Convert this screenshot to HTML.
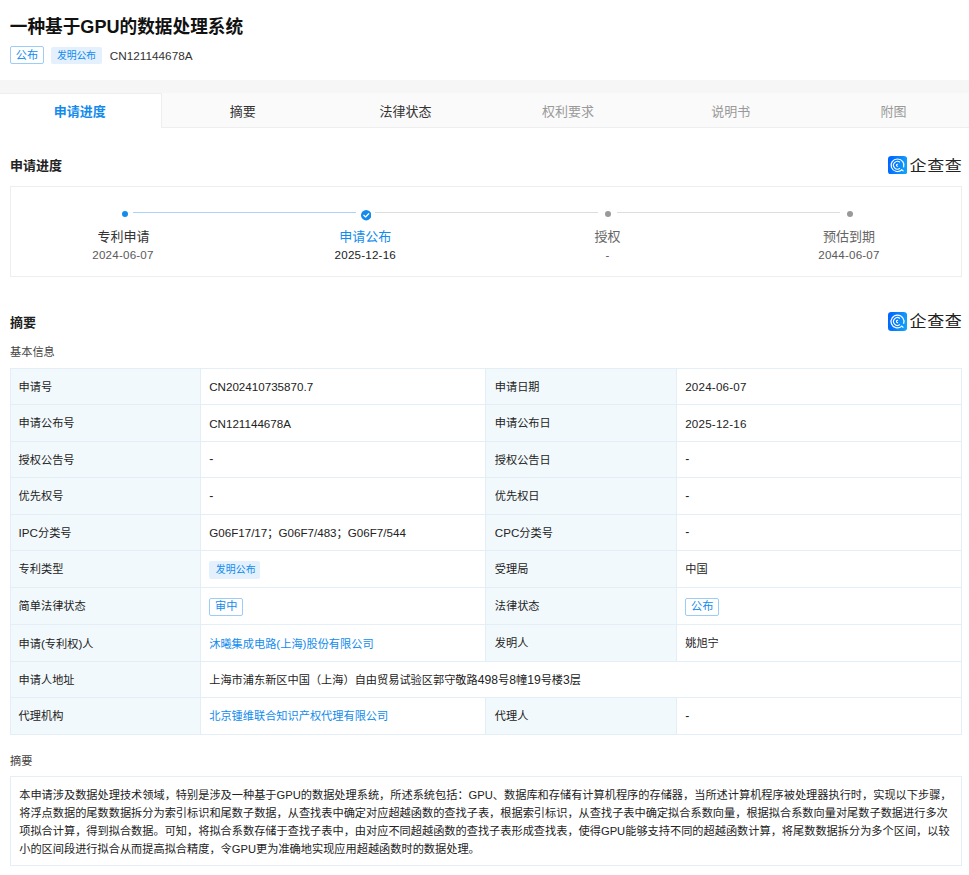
<!DOCTYPE html>
<html lang="zh-CN">
<head>
<meta charset="utf-8">
<title>一种基于GPU的数据处理系统</title>
<style>
*{box-sizing:border-box;margin:0;padding:0}
html,body{width:969px;height:875px;background:#fff;overflow:hidden}
body{position:relative;font-family:"Liberation Sans","Noto Sans CJK SC",sans-serif;font-size:11.2px;color:#222;line-height:1}
.abs{position:absolute;white-space:nowrap}
.n{font-size:1.037em}
.d{font-size:1.037em;letter-spacing:.2px}
.g{font-size:1em}
.n2{font-size:1.085em}
.h{position:relative;top:-1px;font-size:1.1em}
.blue,.st.blue,td.blue{color:#128bed}
h1{position:absolute;left:9.8px;top:14.4px;height:27px;line-height:27px;font-size:17.65px;font-weight:bold;color:#111;white-space:nowrap}
h1 .g{font-size:18.1px;letter-spacing:0}
.tag1{left:10.3px;top:46.3px;width:33.5px;height:17.4px;border:1px solid #9dcdf7;border-radius:2px;color:#128bed;text-align:center;line-height:17.6px;font-size:11.2px;background:#fff}
.tag2{left:51px;top:47px;width:50.8px;height:16.7px;border-radius:2px;background:#e4f1fd;color:#128bed;text-align:center;line-height:18.4px;font-size:9.9px;letter-spacing:-.15px}
.pubno{left:109.8px;top:46.5px;height:18px;line-height:18px;color:#333}
.band{left:0;top:80px;width:969px;height:13.3px;background:#f6f6f6}
.tabs{left:0;top:93.2px;width:969px;height:34.6px;background:#fafafa;border-bottom:1px solid #eee}
.tab{position:absolute;top:0;height:34.6px;width:162.7px;text-align:center;line-height:37.6px;font-size:13px;color:#333}
.tab.on{background:#fff;border-top:1px solid #eee;width:162.35px;color:#128bed;font-weight:bold;height:35.6px;line-height:35.2px}
.tab.off{color:#999}
.sec{font-size:13px;font-weight:bold;color:#222;height:20px;line-height:20px;left:10px}
.logo{width:76px;height:20px;left:888px}
.logo svg{position:absolute;left:0;top:0}
.logo span{position:absolute;left:21.6px;top:0;height:20px;line-height:20px;font-size:17px;letter-spacing:.55px;color:#222;font-weight:400;transform:scaleY(.9);transform-origin:0 50%}
.box{left:10.3px;width:951.4px;border:1px solid #eee;background:#fff}
.ln{height:1px;top:212px}
.st{width:160px;text-align:center;font-size:13px;height:18px;line-height:18px;top:227.5px;color:#333}
.dt{width:160px;text-align:center;height:14px;line-height:14px;top:247.5px;color:#5a5a5a}
.dot{width:6px;height:6px;border-radius:50%;top:210.7px;background:#999}
table{position:absolute;left:10px;top:368px;width:951px;border-collapse:collapse;table-layout:fixed}
td{border:1px solid #e4eef6;padding:2px 0 0 8.2px;vertical-align:middle;white-space:nowrap;color:#222;font-size:11.2px}
td.l{background:#f2f9fc;padding-left:7.6px}
td.l3{padding-left:8.8px}
.t1{display:inline-block;width:34px;height:17.5px;line-height:15px;text-align:center;padding:0;border:1px solid #9dcdf7;border-radius:2px;color:#128bed;vertical-align:middle;background:#fff}
.t2{display:inline-block;height:17.6px;line-height:17.6px;width:51px;text-align:center;border-radius:2px;background:#e4f1fd;color:#128bed;font-size:9.9px;letter-spacing:.1px;vertical-align:middle;padding-left:2px}
.sub{left:10px;color:#444;height:16px;line-height:16px}
.abst{left:10.3px;top:776.3px;width:951.4px;height:89.4px;border:1px solid #e4eef6;padding:8.6px 0 0 7.9px;line-height:18.15px;color:#222;white-space:nowrap}
</style>
</head>
<body>
<h1>一种基于<span class="g">GPU</span>的数据处理系统</h1>
<div class="abs tag1">公布</div>
<div class="abs tag2">发明公布</div>
<div class="abs pubno"><span class="n" style="font-size:1.05em">CN121144678A</span></div>

<div class="abs band"></div>
<div class="abs tabs">
  <div class="tab on" style="left:-1.35px">申请进度</div>
  <div style="position:absolute;left:161px;top:0;width:1px;height:34.6px;background:#eee"></div>
  <div class="tab" style="left:161.35px">摘要</div>
  <div class="tab" style="left:324.05px">法律状态</div>
  <div class="tab off" style="left:486.75px">权利要求</div>
  <div class="tab off" style="left:649.45px">说明书</div>
  <div class="tab off" style="left:812.15px">附图</div>
</div>

<div class="abs sec" style="top:155.5px">申请进度</div>
<div class="abs logo" style="top:155.5px">
  <svg width="19.2" height="18.5" viewBox="0 0 19 19" preserveAspectRatio="none"><defs><linearGradient id="lg" x1="0" y1="0.4" x2="1" y2="0.6"><stop offset="0" stop-color="#0066ff"/><stop offset="1" stop-color="#12a2fa"/></linearGradient></defs><rect width="19" height="19" rx="3.3" fill="url(#lg)"/><path d="M13.51 14.4A6.4 6.4 0 1 1 15.41 11.69" fill="none" stroke="#fff" stroke-width="1.2"/><path d="M11.8 12.57A3.9 3.9 0 1 1 11.8 6.43" fill="none" stroke="#fff" stroke-width="1.15"/><path d="M9.93 10.41A1.05 1.05 0 1 1 9.93 8.59" fill="none" stroke="#fff" stroke-width="1.15"/><path d="M13.4 14L14.9 15.2" stroke="#fff" stroke-width="1.15" stroke-linecap="round"/></svg>
  <span>企查查</span>
</div>

<div class="abs box" style="top:186px;height:91px"></div>
<div class="abs ln" style="left:133px;width:222.6px;background:#a9d3f8"></div>
<div class="abs ln" style="left:375.2px;width:222.6px;background:#ddd"></div>
<div class="abs ln" style="left:617.4px;width:222.6px;background:#ddd"></div>
<div class="abs dot" style="left:122.3px;background:#128bed"></div>
<svg class="abs" style="left:360.5px;top:210.3px" width="10.4" height="10.4" viewBox="0 0 10 10"><circle cx="5" cy="5" r="5" fill="#128bed"/><path d="M2.7 5.1L4.4 6.7L7.4 3.6" fill="none" stroke="#fff" stroke-width="1.2" stroke-linecap="round" stroke-linejoin="round"/></svg>
<div class="abs dot" style="left:604.9px"></div>
<div class="abs dot" style="left:846.7px"></div>
<div class="abs st" style="left:43.4px">专利申请</div>
<div class="abs dt" style="left:43px"><span class="d">2024-06-07</span></div>
<div class="abs st blue" style="left:285.2px">申请公布</div>
<div class="abs dt" style="left:285.3px;color:#222"><span class="d">2025-12-16</span></div>
<div class="abs st" style="left:527.4px;color:#666">授权</div>
<div class="abs dt" style="left:527.4px"><span class="n">-</span></div>
<div class="abs st" style="left:769px;color:#666">预估到期</div>
<div class="abs dt" style="left:769px"><span class="d">2044-06-07</span></div>

<div class="abs sec" style="top:312.9px">摘要</div>
<div class="abs logo" style="top:311.8px">
  <svg width="19.2" height="19" viewBox="0 0 19 19" preserveAspectRatio="none"><rect width="19" height="19" rx="3.3" fill="url(#lg)"/><path d="M13.51 14.4A6.4 6.4 0 1 1 15.41 11.69" fill="none" stroke="#fff" stroke-width="1.2"/><path d="M11.8 12.57A3.9 3.9 0 1 1 11.8 6.43" fill="none" stroke="#fff" stroke-width="1.15"/><path d="M9.93 10.41A1.05 1.05 0 1 1 9.93 8.59" fill="none" stroke="#fff" stroke-width="1.15"/><path d="M13.4 14L14.9 15.2" stroke="#fff" stroke-width="1.15" stroke-linecap="round"/></svg>
  <span style="top:.6px;transform:scaleY(.94)">企查查</span>
</div>
<div class="abs sub" style="top:344.2px">基本信息</div>

<table>
<colgroup><col style="width:190px"><col style="width:285px"><col style="width:191px"><col style="width:285px"></colgroup>
<tr style="height:36px"><td class="l">申请号</td><td><span class="n">CN202410735870.7</span></td><td class="l l3">申请日期</td><td><span class="d">2024-06-07</span></td></tr>
<tr style="height:37px"><td class="l">申请公布号</td><td><span class="n">CN121144678A</span></td><td class="l l3">申请公布日</td><td><span class="d">2025-12-16</span></td></tr>
<tr style="height:36px"><td class="l">授权公告号</td><td><span class="h">-</span></td><td class="l l3">授权公告日</td><td><span class="h">-</span></td></tr>
<tr style="height:37px"><td class="l">优先权号</td><td><span class="h">-</span></td><td class="l l3">优先权日</td><td><span class="h">-</span></td></tr>
<tr style="height:36px"><td class="l"><span class="n">IPC</span>分类号</td><td><span class="n">G06F17/17</span>；<span class="n">G06F7/483</span>；<span class="n">G06F7/544</span></td><td class="l l3"><span class="n">CPC</span>分类号</td><td><span class="h">-</span></td></tr>
<tr style="height:37px"><td class="l">专利类型</td><td><span class="t2">发明公布</span></td><td class="l l3">受理局</td><td>中国</td></tr>
<tr style="height:37px"><td class="l">简单法律状态</td><td><span class="t1">审中</span></td><td class="l l3">法律状态</td><td><span class="t1">公布</span></td></tr>
<tr style="height:37px"><td class="l">申请<span class="n">(</span>专利权<span class="n">)</span>人</td><td class="blue">沐曦集成电路<span class="n">(</span>上海<span class="n">)</span>股份有限公司</td><td class="l l3">发明人</td><td>姚旭宁</td></tr>
<tr style="height:36px"><td class="l">申请人地址</td><td colspan="3">上海市浦东新区中国（上海）自由贸易试验区郭守敬路<span class="n2">498</span>号<span class="n2">8</span>幢<span class="n2">19</span>号楼<span class="n2">3</span>层</td></tr>
<tr style="height:37px"><td class="l">代理机构</td><td class="blue">北京锺维联合知识产权代理有限公司</td><td class="l l3">代理人</td><td><span class="h">-</span></td></tr>
</table>

<div class="abs sub" style="top:752.6px">摘要</div>
<div class="abs abst">本申请涉及数据处理技术领域，特别是涉及一种基于<span class="g">GPU</span>的数据处理系统，所述系统包括：<span class="g">GPU</span>、数据库和存储有计算机程序的存储器，当所述计算机程序被处理器执行时，实现以下步骤，<br>将浮点数据的尾数数据拆分为索引标识和尾数子数据，从查找表中确定对应超越函数的查找子表，根据索引标识，从查找子表中确定拟合系数向量，根据拟合系数向量对尾数子数据进行多次<br>项拟合计算，得到拟合数据。可知，将拟合系数存储于查找子表中，由对应不同超越函数的查找子表形成查找表，使得<span class="g">GPU</span>能够支持不同的超越函数计算，将尾数数据拆分为多个区间，以较<br>小的区间段进行拟合从而提高拟合精度，令<span class="g">GPU</span>更为准确地实现应用超越函数时的数据处理。</div>
</body>
</html>
